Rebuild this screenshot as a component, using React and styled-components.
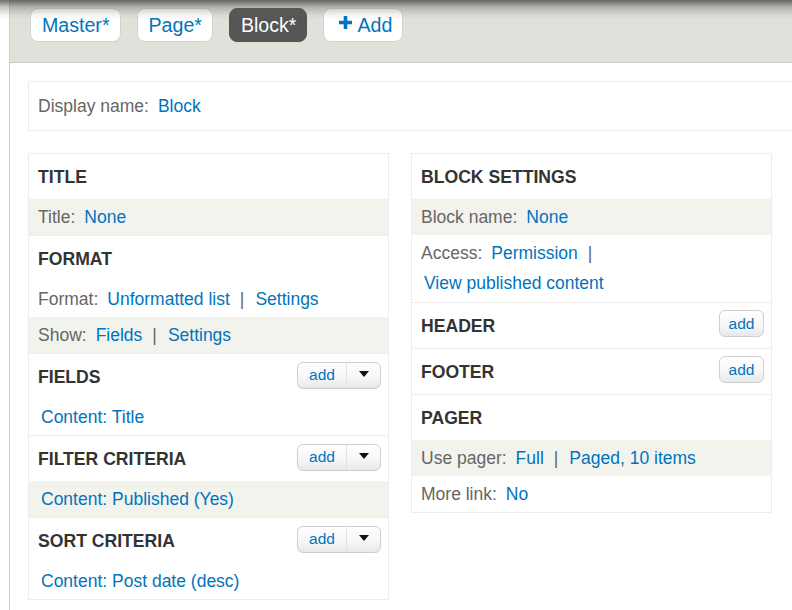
import styled, { createGlobalStyle } from "styled-components";

const GlobalStyle = createGlobalStyle`
  html, body {
    margin: 0;
    padding: 0;
    background: #fff;
    overflow: hidden;
  }
  body {
    font-family: "Liberation Sans", Arial, sans-serif;
    font-size: 17.5px;
    color: #333;
  }
`;

const BLUE = "#0074bd";

const leftSections = [
  {
    title: "TITLE",
    rows: [{ label: "Title:", links: ["None"], shade: true }],
  },
  {
    title: "FORMAT",
    rows: [
      { label: "Format:", links: ["Unformatted list", "Settings"] },
      { label: "Show:", links: ["Fields", "Settings"], shade: true },
    ],
  },
  {
    title: "FIELDS",
    action: "dropdown",
    rows: [{ links: ["Content: Title"], indent: true }],
  },
  {
    title: "FILTER CRITERIA",
    action: "dropdown",
    rows: [{ links: ["Content: Published (Yes)"], indent: true, shade: true }],
  },
  {
    title: "SORT CRITERIA",
    action: "dropdown",
    rows: [{ links: ["Content: Post date (desc)"], indent: true }],
  },
];

const rightSections = [
  {
    title: "BLOCK SETTINGS",
    rows: [
      { label: "Block name:", links: ["None"], shade: true },
      { label: "Access:", links: ["Permission", "View published content"], wrap: true },
    ],
  },
  { title: "HEADER", action: "add", rows: [] },
  { title: "FOOTER", action: "add", rows: [] },
  {
    title: "PAGER",
    rows: [
      { label: "Use pager:", links: ["Full", "Paged, 10 items"], shade: true },
      { label: "More link:", links: ["No"] },
    ],
  },
];

export default function App() {
  return (
    <>
      <GlobalStyle />
      <TopShadow />
      <Shell>
        <TabBar>
          <Tab>Master*</Tab>
          <Tab>Page*</Tab>
          <Tab $active>Block*</Tab>
          <Tab>
            <PlusIcon width="13" height="13" viewBox="0 0 13 13">
              <path d="M4.7 0h3.6v4.7H13v3.6H8.3V13H4.7V8.3H0V4.7h4.7z" fill={BLUE} />
            </PlusIcon>
            Add
          </Tab>
        </TabBar>
        <Content>
          <DisplayBox>
            <Label>Display name:</Label>
            <A>Block</A>
          </DisplayBox>
          <Columns>
            <Column sections={leftSections} />
            <Column sections={rightSections} />
          </Columns>
        </Content>
      </Shell>
    </>
  );
}

function Column({ sections }) {
  return (
    <Panel>
      {sections.map((s) => (
        <Section key={s.title}>
          <SectionHead>
            <Heading>{s.title}</Heading>
            {s.action === "dropdown" && (
              <SplitButton>
                <SplitMain>add</SplitMain>
                <SplitArrow>
                  <svg width="10" height="6" viewBox="0 0 10 6">
                    <path d="M0 0h10L5 6z" fill="#111" />
                  </svg>
                </SplitArrow>
              </SplitButton>
            )}
            {s.action === "add" && <AddButton>add</AddButton>}
          </SectionHead>
          {s.rows.map((r, i) => (
            <Row key={i} $shade={r.shade} $wrap={r.wrap}>
              {r.label && <Label>{r.label}</Label>}
              {r.links.map((l, j) => (
                <Item key={l}>
                  <A $indent={r.indent || (r.wrap && j > 0)}>{l}</A>
                  {j < r.links.length - 1 && <Sep>|</Sep>}
                </Item>
              ))}
            </Row>
          ))}
        </Section>
      ))}
    </Panel>
  );
}

const TopShadow = styled.div`
  position: fixed;
  top: 0;
  left: 0;
  right: 0;
  height: 20px;
  pointer-events: none;
  background: linear-gradient(
    to bottom,
    rgba(60, 60, 55, 0.75) 0,
    rgba(90, 90, 85, 0.35) 7px,
    rgba(120, 120, 110, 0.08) 15px,
    rgba(120, 120, 110, 0) 20px
  );
  z-index: 5;
`;

const Shell = styled.div`
  margin-left: 9px;
  width: 1000px;
  min-height: 610px;
  border-left: 1px solid #cfcfcf;
`;

const TabBar = styled.div`
  display: flex;
  align-items: flex-start;
  gap: 16px;
  height: 54px;
  padding: 8px 0 0 20px;
  background: #e1e1db;
  border-bottom: 1px solid #cdcdc8;
`;

const Tab = styled.div`
  display: flex;
  align-items: center;
  height: 32px;
  padding: 0 10px 0 11px;
  border: 1px solid ${(p) => (p.$active ? "#555" : "#d4d4cf")};
  border-radius: 8px;
  background: ${(p) => (p.$active ? "#555555" : "#fff")};
  color: ${(p) => (p.$active ? "#fff" : BLUE)};
  font-size: 19.6px;
  white-space: nowrap;
`;

const PlusIcon = styled.svg`
  margin: -5px 5px 0 4px;
`;

const Content = styled.div`
  padding: 18px 0 0 18px;
`;

const DisplayBox = styled.div`
  display: flex;
  align-items: center;
  height: 48px;
  padding: 0 9px;
  border: 1px solid #ededed;
  margin-bottom: 22px;
`;

const Columns = styled.div`
  display: flex;
  align-items: flex-start;
  gap: 22px;
`;

const Panel = styled.div`
  width: 359px;
  border: 1px solid #ededed;
`;

const Section = styled.div`
  & + & {
    border-top: 1px solid #ededed;
  }
`;

const SectionHead = styled.div`
  display: flex;
  align-items: center;
  justify-content: space-between;
  height: 45px;
  box-sizing: border-box;
  padding: 1px 7px 0 9px;
`;

const Heading = styled.h3`
  margin: 0;
  font-size: 17.6px;
  font-weight: bold;
  color: #333;
`;

const Row = styled.div`
  display: flex;
  flex-wrap: ${(p) => (p.$wrap ? "wrap" : "nowrap")};
  align-items: center;
  row-gap: 8px;
  min-height: 36px;
  box-sizing: border-box;
  padding: ${(p) => (p.$wrap ? "7px 9px 8px" : "0 9px")};
  line-height: 22px;
  background: ${(p) => (p.$shade ? "#f3f3ee" : "#fff")};
`;

const Label = styled.span`
  color: #666;
  margin-right: 9px;
  white-space: nowrap;
`;

const Item = styled.span`
  display: inline-flex;
  white-space: nowrap;
`;

const A = styled.a`
  color: ${BLUE};
  text-decoration: none;
  margin-left: ${(p) => (p.$indent ? "3px" : "0")};
`;

const Sep = styled.span`
  color: #666;
  margin: 0 11px 0 10px;
`;

const buttonBase = `
  box-sizing: border-box;
  height: 27px;
  border: 1px solid #cfcfcf;
  border-radius: 6px;
  background: linear-gradient(to bottom, #ffffff 0%, #f6f6f6 60%, #e8e8e8 100%);
  color: ${BLUE};
  font-size: 15.5px;
  font-family: "Liberation Sans", Arial, sans-serif;
`;

const AddButton = styled.div`
  ${buttonBase}
  display: flex;
  align-items: center;
  justify-content: center;
  width: 45px;
  height: 27px;
  margin-top: -5px;
`;

const SplitButton = styled.div`
  ${buttonBase}
  display: flex;
  width: 84px;
  margin-top: -4px;
`;

const SplitMain = styled.span`
  display: flex;
  align-items: center;
  justify-content: center;
  width: 48px;
  border-right: 1px solid #e2e2e2;
`;

const SplitArrow = styled.span`
  flex: 1;
  display: flex;
  align-items: center;
  justify-content: center;
  padding-bottom: 3px;
`;
